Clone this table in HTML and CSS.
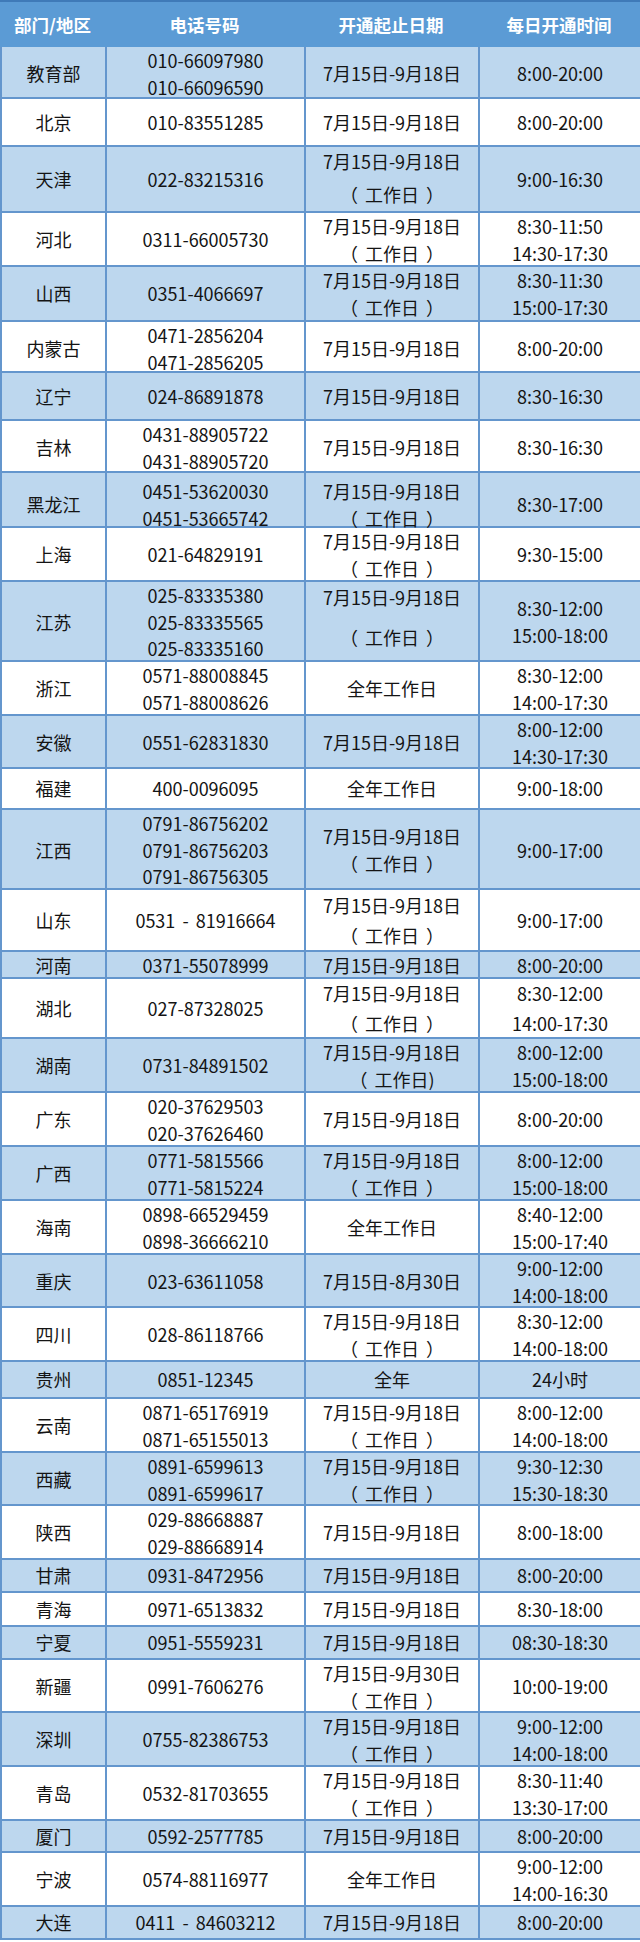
FILE: index.html
```html
<!DOCTYPE html>
<html lang="zh-CN">
<head>
<meta charset="utf-8">
<title>咨询电话</title>
<link rel="stylesheet" href="styles.css">
</head>
<body>
<div class="sheet">
  <div class="head">
    <div class="hc">部门/地区</div>
    <div class="hc">电话号码</div>
    <div class="hc">开通起止日期</div>
    <div class="hc">每日开通时间</div>
  </div>
  <div class="body">
    <div class="row h52"><div class="c"><span>教育部</span></div><div class="c"><span>010-66097980</span><span>010-66096590</span></div><div class="c"><span>7月15日-9月18日</span></div><div class="c"><span>8:00-20:00</span></div></div>
    <div class="row h48"><div class="c"><span>北京</span></div><div class="c"><span>010-83551285</span></div><div class="c"><span>7月15日-9月18日</span></div><div class="c"><span>8:00-20:00</span></div></div>
    <div class="row h66"><div class="c"><span>天津</span></div><div class="c"><span>022-83215316</span></div><div class="c g6 up2"><span>7月15日-9月18日</span><span>（ 工作日 ）</span></div><div class="c"><span>9:00-16:30</span></div></div>
    <div class="row h54"><div class="c"><span>河北</span></div><div class="c"><span>0311-66005730</span></div><div class="c"><span>7月15日-9月18日</span><span>（ 工作日 ）</span></div><div class="c"><span>8:30-11:50</span><span>14:30-17:30</span></div></div>
    <div class="row h55"><div class="c"><span>山西</span></div><div class="c"><span>0351-4066697</span></div><div class="c"><span>7月15日-9月18日</span><span>（ 工作日 ）</span></div><div class="c"><span>8:30-11:30</span><span>15:00-17:30</span></div></div>
    <div class="row h51"><div class="c"><span>内蒙古</span></div><div class="c"><span>0471-2856204</span><span>0471-2856205</span></div><div class="c"><span>7月15日-9月18日</span></div><div class="c"><span>8:00-20:00</span></div></div>
    <div class="row h48"><div class="c"><span>辽宁</span></div><div class="c"><span>024-86891878</span></div><div class="c"><span>7月15日-9月18日</span></div><div class="c"><span>8:30-16:30</span></div></div>
    <div class="row h52"><div class="c"><span>吉林</span></div><div class="c"><span>0431-88905722</span><span>0431-88905720</span></div><div class="c"><span>7月15日-9月18日</span></div><div class="c"><span>8:30-16:30</span></div></div>
    <div class="row h55 down"><div class="c"><span>黑龙江</span></div><div class="c"><span>0451-53620030</span><span>0451-53665742</span></div><div class="c"><span>7月15日-9月18日</span><span>（ 工作日 ）</span></div><div class="c"><span>8:30-17:00</span></div></div>
    <div class="row h54"><div class="c"><span>上海</span></div><div class="c"><span>021-64829191</span></div><div class="c"><span>7月15日-9月18日</span><span>（ 工作日 ）</span></div><div class="c"><span>9:30-15:00</span></div></div>
    <div class="row h80"><div class="c"><span>江苏</span></div><div class="c"><span>025-83335380</span><span>025-83335565</span><span>025-83335160</span></div><div class="c g13 up8"><span>7月15日-9月18日</span><span>（ 工作日 ）</span></div><div class="c"><span>8:30-12:00</span><span>15:00-18:00</span></div></div>
    <div class="row h54"><div class="c"><span>浙江</span></div><div class="c"><span>0571-88008845</span><span>0571-88008626</span></div><div class="c"><span>全年工作日</span></div><div class="c"><span>8:30-12:00</span><span>14:00-17:30</span></div></div>
    <div class="row h53"><div class="c"><span>安徽</span></div><div class="c"><span>0551-62831830</span></div><div class="c"><span>7月15日-9月18日</span></div><div class="c"><span>8:00-12:00</span><span>14:30-17:30</span></div></div>
    <div class="row h41"><div class="c"><span>福建</span></div><div class="c"><span>400-0096095</span></div><div class="c"><span>全年工作日</span></div><div class="c"><span>9:00-18:00</span></div></div>
    <div class="row h80"><div class="c"><span>江西</span></div><div class="c"><span>0791-86756202</span><span>0791-86756203</span><span>0791-86756305</span></div><div class="c"><span>7月15日-9月18日</span><span>（ 工作日 ）</span></div><div class="c"><span>9:00-17:00</span></div></div>
    <div class="row h62"><div class="c"><span>山东</span></div><div class="c"><span>0531 - 81916664</span></div><div class="c g3"><span>7月15日-9月18日</span><span>（ 工作日 ）</span></div><div class="c"><span>9:00-17:00</span></div></div>
    <div class="row h27"><div class="c"><span>河南</span></div><div class="c"><span>0371-55078999</span></div><div class="c"><span>7月15日-9月18日</span></div><div class="c"><span>8:00-20:00</span></div></div>
    <div class="row h60"><div class="c"><span>湖北</span></div><div class="c"><span>027-87328025</span></div><div class="c g3"><span>7月15日-9月18日</span><span>（ 工作日 ）</span></div><div class="c g3"><span>8:30-12:00</span><span>14:00-17:30</span></div></div>
    <div class="row h54"><div class="c"><span>湖南</span></div><div class="c"><span>0731-84891502</span></div><div class="c"><span>7月15日-9月18日</span><span>（ 工作日)</span></div><div class="c"><span>8:00-12:00</span><span>15:00-18:00</span></div></div>
    <div class="row h54"><div class="c"><span>广东</span></div><div class="c"><span>020-37629503</span><span>020-37626460</span></div><div class="c"><span>7月15日-9月18日</span></div><div class="c"><span>8:00-20:00</span></div></div>
    <div class="row h54"><div class="c"><span>广西</span></div><div class="c"><span>0771-5815566</span><span>0771-5815224</span></div><div class="c"><span>7月15日-9月18日</span><span>（ 工作日 ）</span></div><div class="c"><span>8:00-12:00</span><span>15:00-18:00</span></div></div>
    <div class="row h54"><div class="c"><span>海南</span></div><div class="c"><span>0898-66529459</span><span>0898-36666210</span></div><div class="c"><span>全年工作日</span></div><div class="c"><span>8:40-12:00</span><span>15:00-17:40</span></div></div>
    <div class="row h53"><div class="c"><span>重庆</span></div><div class="c"><span>023-63611058</span></div><div class="c"><span>7月15日-8月30日</span></div><div class="c"><span>9:00-12:00</span><span>14:00-18:00</span></div></div>
    <div class="row h54"><div class="c"><span>四川</span></div><div class="c"><span>028-86118766</span></div><div class="c"><span>7月15日-9月18日</span><span>（ 工作日 ）</span></div><div class="c"><span>8:30-12:00</span><span>14:00-18:00</span></div></div>
    <div class="row h37"><div class="c"><span>贵州</span></div><div class="c"><span>0851-12345</span></div><div class="c"><span>全年</span></div><div class="c"><span>24小时</span></div></div>
    <div class="row h54"><div class="c"><span>云南</span></div><div class="c"><span>0871-65176919</span><span>0871-65155013</span></div><div class="c"><span>7月15日-9月18日</span><span>（ 工作日 ）</span></div><div class="c"><span>8:00-12:00</span><span>14:00-18:00</span></div></div>
    <div class="row h53"><div class="c"><span>西藏</span></div><div class="c"><span>0891-6599613</span><span>0891-6599617</span></div><div class="c"><span>7月15日-9月18日</span><span>（ 工作日 ）</span></div><div class="c"><span>9:30-12:30</span><span>15:30-18:30</span></div></div>
    <div class="row h54"><div class="c"><span>陕西</span></div><div class="c"><span>029-88668887</span><span>029-88668914</span></div><div class="c"><span>7月15日-9月18日</span></div><div class="c"><span>8:00-18:00</span></div></div>
    <div class="row h33"><div class="c"><span>甘肃</span></div><div class="c"><span>0931-8472956</span></div><div class="c"><span>7月15日-9月18日</span></div><div class="c"><span>8:00-20:00</span></div></div>
    <div class="row h34"><div class="c"><span>青海</span></div><div class="c"><span>0971-6513832</span></div><div class="c"><span>7月15日-9月18日</span></div><div class="c"><span>8:30-18:00</span></div></div>
    <div class="row h33"><div class="c"><span>宁夏</span></div><div class="c"><span>0951-5559231</span></div><div class="c"><span>7月15日-9月18日</span></div><div class="c"><span>08:30-18:30</span></div></div>
    <div class="row h53"><div class="c"><span>新疆</span></div><div class="c"><span>0991-7606276</span></div><div class="c"><span>7月15日-9月30日</span><span>（ 工作日 ）</span></div><div class="c"><span>10:00-19:00</span></div></div>
    <div class="row h54"><div class="c"><span>深圳</span></div><div class="c"><span>0755-82386753</span></div><div class="c"><span>7月15日-9月18日</span><span>（ 工作日 ）</span></div><div class="c"><span>9:00-12:00</span><span>14:00-18:00</span></div></div>
    <div class="row h54"><div class="c"><span>青岛</span></div><div class="c"><span>0532-81703655</span></div><div class="c"><span>7月15日-9月18日</span><span>（ 工作日 ）</span></div><div class="c"><span>8:30-11:40</span><span>13:30-17:00</span></div></div>
    <div class="row h32"><div class="c"><span>厦门</span></div><div class="c"><span>0592-2577785</span></div><div class="c"><span>7月15日-9月18日</span></div><div class="c"><span>8:00-20:00</span></div></div>
    <div class="row h54"><div class="c"><span>宁波</span></div><div class="c"><span>0574-88116977</span></div><div class="c"><span>全年工作日</span></div><div class="c"><span>9:00-12:00</span><span>14:00-16:30</span></div></div>
    <div class="row h33"><div class="c"><span>大连</span></div><div class="c"><span>0411 - 84603212</span></div><div class="c"><span>7月15日-9月18日</span></div><div class="c"><span>8:00-20:00</span></div></div>
  </div>
</div>
</body>
</html>
```
FILE: styles.css
```css
* { box-sizing: border-box; }
html, body { margin: 0; padding: 0; background: #ffffff; }
body {
  font-family: "Noto Sans CJK SC", "Noto Sans", sans-serif;
  font-size: 18px;
  color: #141414;
  width: 640px;
}
.sheet {
  width: 640px;
  border-top: 2px solid #3f7ab8;
}
.head {
  display: grid;
  grid-template-columns: 105px 199px 174px 162px;
  height: 45px;
  background: #5b9bd5;
}
.hc {
  display: flex;
  align-items: center;
  justify-content: center;
  color: #ffffff;
  font-weight: 700;
  font-size: 17.5px;
  padding-bottom: 1px;
}
.row {
  display: grid;
  grid-template-columns: 105px 199px 174px 162px;
  border-bottom: 2px solid #6496cd;
  background: #ffffff;
}
.body .row:nth-child(odd) { background: #bdd7ee; }
.c {
  display: flex;
  flex-direction: column;
  align-items: center;
  justify-content: center;
  border-left: 2px solid #6496cd;
  line-height: 26.5px;
  white-space: pre;
  word-spacing: 3px;
  overflow: visible;
}
.c span { display: block; }
.g3 { gap: 3px; }
.g6 { gap: 6px; }
.g13 { gap: 13px; }
.up2 { padding-bottom: 3px; }
.up8 { padding-bottom: 9px; }
.down .c { padding-top: 5px; }
.h27 { height: 27px; }
.h32 { height: 32px; }
.h33 { height: 33px; }
.h34 { height: 34px; }
.h37 { height: 37px; }
.h41 { height: 41px; }
.h48 { height: 48px; }
.h51 { height: 51px; }
.h52 { height: 52px; }
.h53 { height: 53px; }
.h54 { height: 54px; }
.h55 { height: 55px; }
.h60 { height: 60px; }
.h62 { height: 62px; }
.h66 { height: 66px; }
.h80 { height: 80px; }
```
